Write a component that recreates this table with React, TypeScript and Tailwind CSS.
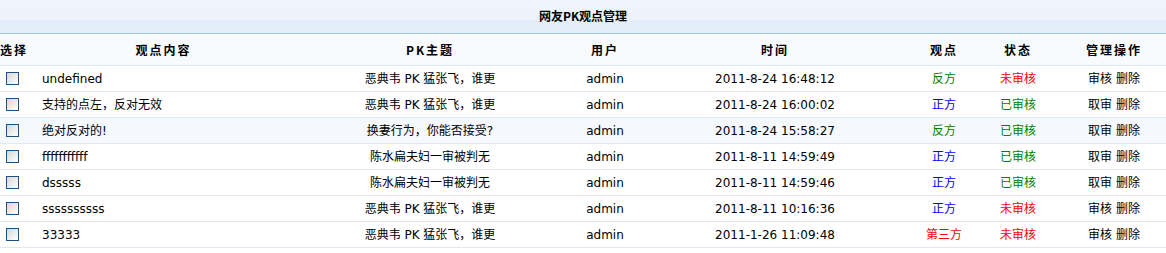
type Row = {
  content: string;
  topic: string;
  user: string;
  time: string;
  view: "反方" | "正方" | "第三方";
  checked: boolean;
};

const rows: Row[] = [
  { content: "undefined", topic: "恶典韦 PK 猛张飞，谁更", user: "admin", time: "2011-8-24 16:48:12", view: "反方", checked: false },
  { content: "支持的点左，反对无效", topic: "恶典韦 PK 猛张飞，谁更", user: "admin", time: "2011-8-24 16:00:02", view: "正方", checked: true },
  { content: "绝对反对的!", topic: "换妻行为，你能否接受?", user: "admin", time: "2011-8-24 15:58:27", view: "反方", checked: true },
  { content: "fffffffffff", topic: "陈水扁夫妇一审被判无", user: "admin", time: "2011-8-11 14:59:49", view: "正方", checked: true },
  { content: "dsssss", topic: "陈水扁夫妇一审被判无", user: "admin", time: "2011-8-11 14:59:46", view: "正方", checked: true },
  { content: "ssssssssss", topic: "恶典韦 PK 猛张飞，谁更", user: "admin", time: "2011-8-11 10:16:36", view: "正方", checked: false },
  { content: "33333", topic: "恶典韦 PK 猛张飞，谁更", user: "admin", time: "2011-1-26 11:09:48", view: "第三方", checked: false },
];

const cols = "grid grid-cols-[25px_277px_256px_94px_246px_92px_56px_136px]";

function viewColor(v: Row["view"]) {
  if (v === "反方") return "text-[#008000]";
  if (v === "正方") return "text-[#0000ff]";
  return "text-[#ff0000]";
}

function Checkbox() {
  return (
    <span className="block w-[13px] h-[13px] border border-[#1c5180] bg-gradient-to-br from-[#d8d8d2] to-white" />
  );
}

export default function App() {
  return (
    <div
      className="w-[1166px] h-[253px] overflow-hidden bg-white text-[12px] text-black"
      style={{ fontFamily: '"DejaVu Sans", "Noto Sans CJK SC", sans-serif' }}
    >
      {/* title bar */}
      <div className="h-[34px] flex items-start justify-center pt-[8px] border-b border-[#a6c4df] bg-[linear-gradient(#f0f5fb_0%,#ecf3fb_60%,#e3eef9_60%,#e3eef9_100%)]">
        <span className="font-bold leading-[16px]" style={{ fontFamily: '"Noto Sans CJK SC", sans-serif' }}>
          网友PK观点管理
        </span>
      </div>

      <div className="w-[1182px]">
        {/* header */}
        <div
          className={`${cols} h-[32px] items-center bg-[#f8fbfe] border-b border-[#dfe8f4] font-bold tracking-[2px] whitespace-nowrap`}
          style={{ fontFamily: '"Noto Sans CJK SC", sans-serif' }}
        >
          <div className="text-left">选择</div>
          <div className="text-center">观点内容</div>
          <div className="text-center">PK主题</div>
          <div className="text-center">用户</div>
          <div className="text-center">时间</div>
          <div className="text-center">观点</div>
          <div className="text-center">状态</div>
          <div className="text-center">管理操作</div>
        </div>

        {rows.map((r, i) => (
          <div
            key={i}
            className={`${cols} h-[26px] items-center border-b border-[#dfe8f4] ${i === 2 ? "bg-[#f5f9fd]" : "bg-white"}`}
          >
            <div className="flex justify-center">
              <Checkbox />
            </div>
            <div className="pl-[17px] whitespace-nowrap">{r.content}</div>
            <div className="text-center whitespace-nowrap">{r.topic}</div>
            <div className="text-center">{r.user}</div>
            <div className="text-center">{r.time}</div>
            <div className={`text-center ${viewColor(r.view)}`}>{r.view}</div>
            <div className={`text-center ${r.checked ? "text-[#008000]" : "text-[#ff0000]"}`}>
              {r.checked ? "已审核" : "未审核"}
            </div>
            <div className="text-center whitespace-nowrap">
              {r.checked ? "取审" : "审核"} 删除
            </div>
          </div>
        ))}
      </div>
    </div>
  );
}
